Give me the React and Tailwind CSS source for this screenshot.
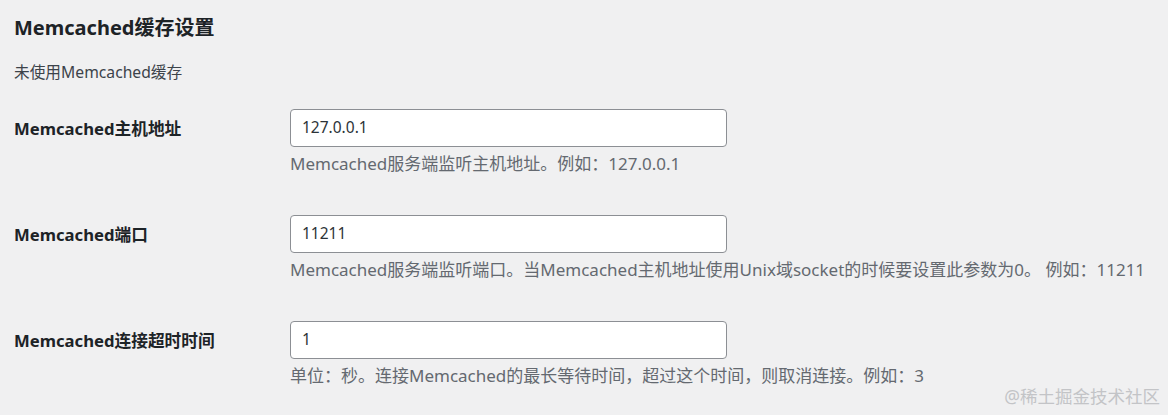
export default function App() {
  const rows = [
    {
      label: "Memcached主机地址",
      value: "127.0.0.1",
      desc: "Memcached服务端监听主机地址。例如：127.0.0.1",
    },
    {
      label: "Memcached端口",
      value: "11211",
      desc: "Memcached服务端监听端口。当Memcached主机地址使用Unix域socket的时候要设置此参数为0。 例如：11211",
    },
    {
      label: "Memcached连接超时时间",
      value: "1",
      desc: "单位：秒。连接Memcached的最长等待时间，超过这个时间，则取消连接。例如：3",
    },
  ];

  return (
    <div
      className="relative w-[1168px] h-[415px] overflow-hidden bg-[#f0f0f1] pl-[14px] pt-[13px]"
      style={{ fontFamily: '"Noto Sans", "Noto Sans CJK SC", sans-serif' }}
    >
      <h2 className="text-[20px] leading-[30px] font-bold text-[#1d2327]">
        Memcached缓存设置
      </h2>
      <p className="mt-[18px] text-[15.7px] leading-[22px] text-[#3c434a]">
        未使用Memcached缓存
      </p>

      <div className="mt-[26px] flex flex-col gap-[40px]">
        {rows.map((r) => (
          <div key={r.label} className="flex items-start">
            <div className="w-[276px] h-[39px] flex items-center text-[16.7px] font-bold text-[#1d2327]">
              {r.label}
            </div>
            <div className="flex flex-col">
              <div className="w-[437px] h-[38px] rounded-[4px] border border-[#8c8f94] bg-white px-[11px] flex items-center text-[15.5px] text-[#2c3338]">
                {r.value}
              </div>
              <div className="mt-[6px] text-[17px] leading-[22px] text-[#646970] whitespace-nowrap">
                {r.desc}
              </div>
            </div>
          </div>
        ))}
      </div>

      <div className="absolute right-[8px] bottom-[6px] text-[17.5px] text-[#c3c4c7]">
        @稀土掘金技术社区
      </div>
    </div>
  );
}
